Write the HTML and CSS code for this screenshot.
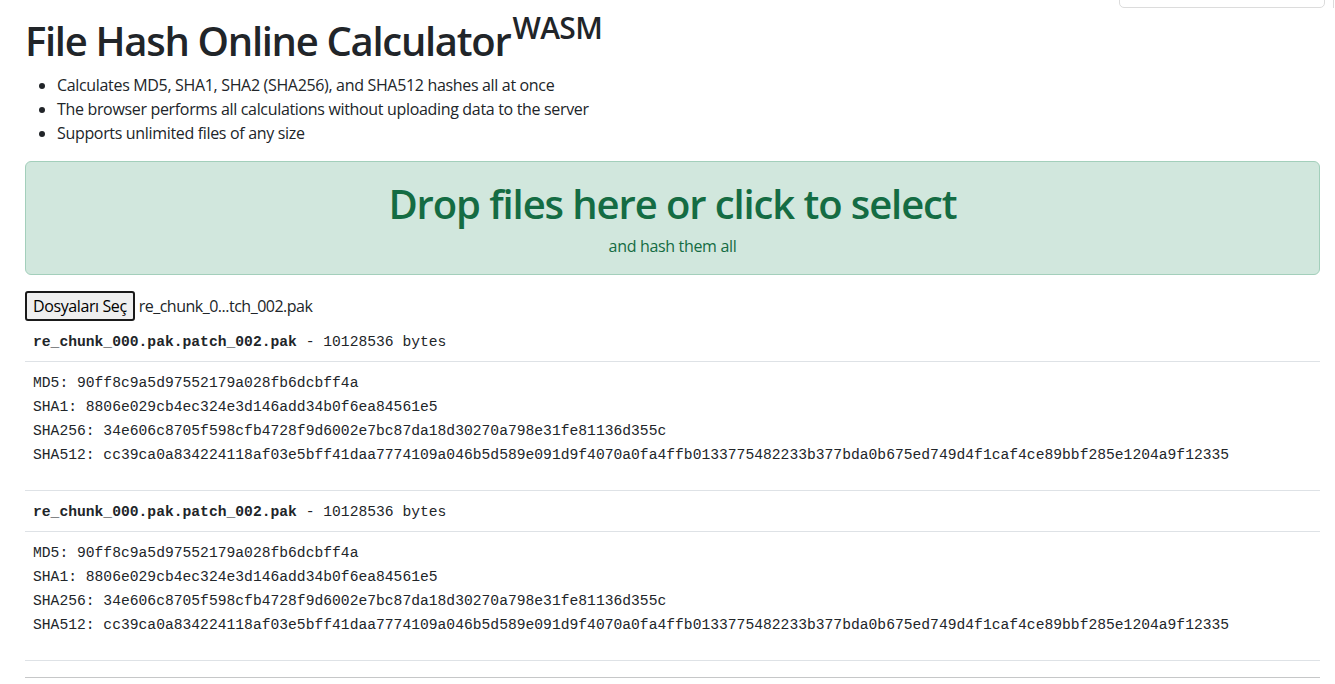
FILE: index.html
```html
<!DOCTYPE html>
<html lang="en">
<head>
<meta charset="utf-8">
<title>File Hash Online Calculator</title>
<link rel="stylesheet" href="styles.css">
</head>
<body>
<div class="topbox"></div>
<div class="topbox-edge"></div>
<main class="page">
  <h1 class="title">File Hash Online Calculator<sup class="tag">WASM</sup></h1>
  <ul class="features">
    <li>Calculates MD5, SHA1, SHA2 (SHA256), and SHA512 hashes all at once</li>
    <li>The browser performs all calculations without uploading data to the server</li>
    <li>Supports unlimited files of any size</li>
  </ul>
  <div class="dropzone">
    <h2 class="drop-title">Drop files here or click to select</h2>
    <p class="drop-sub">and hash them all</p>
  </div>
  <div class="picker">
    <button class="pick-btn" type="button">Dosyaları Seç</button>
    <span class="pick-name">re_chunk_0...tch_002.pak</span>
  </div>
  <section class="result">
    <div class="result-head"><b>re_chunk_000.pak.patch_002.pak</b> - 10128536 bytes</div>
    <div class="result-body">
      <div>MD5: 90ff8c9a5d97552179a028fb6dcbff4a</div>
      <div>SHA1: 8806e029cb4ec324e3d146add34b0f6ea84561e5</div>
      <div>SHA256: 34e606c8705f598cfb4728f9d6002e7bc87da18d30270a798e31fe81136d355c</div>
      <div>SHA512: cc39ca0a834224118af03e5bff41daa7774109a046b5d589e091d9f4070a0fa4ffb0133775482233b377bda0b675ed749d4f1caf4ce89bbf285e1204a9f12335</div>
    </div>
  </section>
  <section class="result">
    <div class="result-head"><b>re_chunk_000.pak.patch_002.pak</b> - 10128536 bytes</div>
    <div class="result-body">
      <div>MD5: 90ff8c9a5d97552179a028fb6dcbff4a</div>
      <div>SHA1: 8806e029cb4ec324e3d146add34b0f6ea84561e5</div>
      <div>SHA256: 34e606c8705f598cfb4728f9d6002e7bc87da18d30270a798e31fe81136d355c</div>
      <div>SHA512: cc39ca0a834224118af03e5bff41daa7774109a046b5d589e091d9f4070a0fa4ffb0133775482233b377bda0b675ed749d4f1caf4ce89bbf285e1204a9f12335</div>
    </div>
  </section>
  <hr class="rule">
</main>
</body>
</html>
```
FILE: styles.css
```css
html, body {
  margin: 0;
  padding: 0;
  background: #fff;
}
body {
  font-family: "Open Sans", "Noto Sans", sans-serif;
  font-size: 16px;
  line-height: 24px;
  color: #212529;
  letter-spacing: -0.33px;
}
.topbox {
  position: absolute;
  top: -30px;
  left: 1119px;
  width: 204px;
  height: 36px;
  border: 1px solid #dcdcdc;
  border-radius: 5px;
}
.topbox-edge {
  position: absolute;
  top: 0;
  left: 1333px;
  width: 2px;
  height: 8px;
  border-left: 1px solid #dcdcdc;
}
.page {
  padding: 17px 15px 0 25px;
}
.title {
  margin: 0 0 8px;
  font-size: 40px;
  line-height: 48px;
  font-weight: 600;
  letter-spacing: -1.3px;
}
.tag {
  font-size: 30px;
  line-height: 0;
  position: relative;
  top: -3px;
  vertical-align: super;
  letter-spacing: -0.6px;
  margin-left: 2px;
}
.features {
  margin: 0 0 16px;
  padding-left: 32px;
}
.dropzone {
  background: #d1e7dd;
  border: 1px solid #a3cfbb;
  border-radius: 6px;
  color: #146c43;
  text-align: center;
  padding: 16px;
}
.drop-title {
  margin: 0 0 8px;
  font-size: 40px;
  line-height: 48px;
  font-weight: 600;
  letter-spacing: -1.1px;
  position: relative;
  top: 2px;
}
.drop-sub {
  margin: 0;
}
.picker {
  margin-top: 16px;
  display: flex;
  align-items: center;
  gap: 4px;
  height: 30px;
}
.pick-btn {
  font-family: inherit;
  font-size: 16px;
  letter-spacing: -0.4px;
  height: 30px;
  padding: 0 6px;
  background: #efefef;
  border: 2px solid #1a1a1a;
  border-radius: 3px;
  color: #000;
}
.pick-name {
  font-size: 16px;
  letter-spacing: -0.5px;
}
.result-head,
.result-body {
  font-family: "Liberation Mono", "DejaVu Sans Mono", monospace;
  font-size: 14.66px;
  line-height: 24px;
  letter-spacing: 0;
}
.result-head {
  padding: 9px 8px 7px;
  border-bottom: 1px solid #dee2e6;
}
.result-body {
  padding: 9px 8px 23px;
  border-bottom: 1px solid #dee2e6;
}
.rule {
  margin: 16px 0 0;
  border: 0;
  border-top: 1px solid #c6c7c8;
}
```
